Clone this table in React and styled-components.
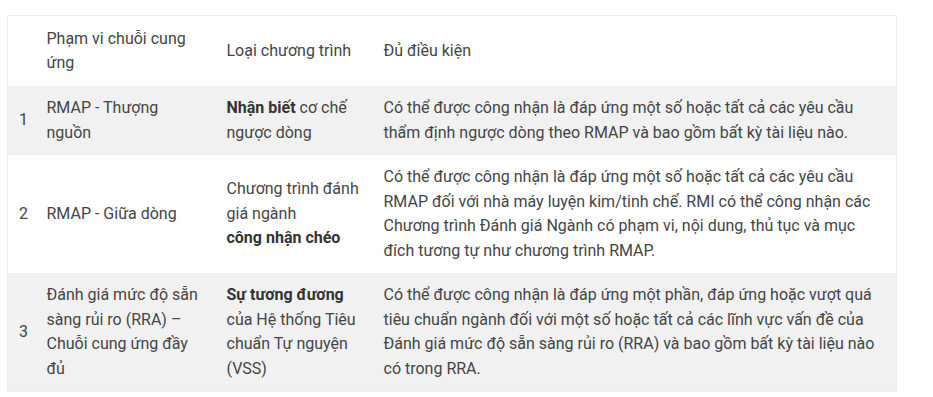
import styled, { createGlobalStyle } from "styled-components";

const GlobalStyle = createGlobalStyle`
    body {
        margin: 0;
        background: #fff;
        font-family: Roboto, "Liberation Sans", sans-serif;
    }
`;

const Page = styled.div`
    padding: 15px 0 0 7px;
`;

const Table = styled.table`
    width: 890px;
    table-layout: fixed;
    border-collapse: collapse;
    border: 1px solid #eeeeee;
    font-size: 16px;
    line-height: 24.5px;
    color: #444;

    tbody tr:nth-child(odd) {
        background: #f1f1f1;
    }
`;

const Cell = styled.td`
    padding: 10px 10px 10px 11px;
    vertical-align: middle;
    text-align: left;
    font-weight: 400;

    &:last-child {
        padding-right: 12px;
    }

    b {
        font-weight: 700;
        color: #333;
    }
`;

const HeadCell = styled(Cell).attrs({ as: "th" })`
    padding-top: 10.5px;
    padding-bottom: 10.5px;
`;

const rows = [
    {
        no: "1",
        scope: "RMAP - Thượng nguồn",
        type: <><b>Nhận biết</b> cơ chế ngược dòng</>,
        ok: "Có thể được công nhận là đáp ứng một số hoặc tất cả các yêu cầu thẩm định ngược dòng theo RMAP và bao gồm bất kỳ tài liệu nào.",
    },
    {
        no: "2",
        scope: "RMAP - Giữa dòng",
        type: <>Chương trình đánh giá ngành<br /><b>công nhận chéo</b></>,
        ok: "Có thể được công nhận là đáp ứng một số hoặc tất cả các yêu cầu RMAP đối với nhà máy luyện kim/tinh chế. RMI có thể công nhận các Chương trình Đánh giá Ngành có phạm vi, nội dung, thủ tục và mục đích tương tự như chương trình RMAP.",
    },
    {
        no: "3",
        scope: "Đánh giá mức độ sẵn sàng rủi ro (RRA) – Chuỗi cung ứng đầy đủ",
        type: <><b>Sự tương đương</b> của Hệ thống Tiêu chuẩn Tự nguyện (VSS)</>,
        ok: "Có thể được công nhận là đáp ứng một phần, đáp ứng hoặc vượt quá tiêu chuẩn ngành đối với một số hoặc tất cả các lĩnh vực vấn đề của Đánh giá mức độ sẵn sàng rủi ro (RRA) và bao gồm bất kỳ tài liệu nào có trong RRA.",
    },
];

function App() {
    return (
        <Page>
            <GlobalStyle />
            <Table>
                <colgroup>
                    <col style={{ width: 28 }} />
                    <col style={{ width: 180 }} />
                    <col style={{ width: 157 }} />
                    <col />
                </colgroup>
                <thead>
                    <tr>
                        <HeadCell></HeadCell>
                        <HeadCell>Phạm vi chuỗi cung ứng</HeadCell>
                        <HeadCell>Loại chương trình</HeadCell>
                        <HeadCell>Đủ điều kiện</HeadCell>
                    </tr>
                </thead>
                <tbody>
                    {rows.map((r) => (
                        <tr key={r.no}>
                            <Cell>{r.no}</Cell>
                            <Cell>{r.scope}</Cell>
                            <Cell>{r.type}</Cell>
                            <Cell>{r.ok}</Cell>
                        </tr>
                    ))}
                </tbody>
            </Table>
        </Page>
    );
}

export default App;
